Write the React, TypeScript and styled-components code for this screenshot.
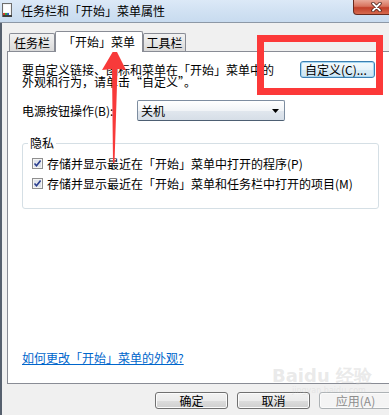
import React from "react";
import styled, { createGlobalStyle } from "styled-components";

const GlobalStyle = createGlobalStyle`
  html, body {
    margin: 0;
    padding: 0;
    background: #f0f0f0;
  }
  body {
    font-family: "Noto Sans CJK SC", "DejaVu Sans", sans-serif;
    font-size: 12px;
    color: #000;
  }
`;

const Window = styled.div`
  position: relative;
  width: 389px;
  height: 415px;
  overflow: hidden;
  background: #f0f0f0;
`;

const TitleBar = styled.div`
  height: 22px;
  display: flex;
  align-items: flex-start;
  background: linear-gradient(180deg, #dce9f7 0%, #cfe0f2 60%, #c8dbef 100%);
  border-bottom: 1px solid #8d98a6;
`;

const TitleIcon = styled.svg`
  margin: 3px 0 0 2px;
  flex: none;
`;

const TitleText = styled.div`
  margin: 3px 0 0 8px;
  line-height: 16px;
  font-size: 12px;
  color: #000;
  white-space: nowrap;
`;

const CloseButton = styled.div`
  margin-left: auto;
  margin-right: -11px;
  width: 47px;
  height: 15px;
  box-sizing: border-box;
  border: 1px solid #6a2a1e;
  border-top: none;
  border-radius: 0 0 4px 4px;
  background: linear-gradient(180deg, #e9a999 0%, #d8735e 45%, #c2402a 55%, #d66a4f 100%);
  display: flex;
  align-items: center;
  justify-content: center;
`;

const Body = styled.div`
  border-left: 2px solid #56606e;
  padding: 8px 0 0 5px;
  height: 392px;
  box-sizing: border-box;
`;

const TabRow = styled.div`
  display: flex;
  align-items: flex-end;
  padding-left: 2px;
  height: 20px;
`;

const Tab = styled.div<{ $active?: boolean; $w: number }>`
  position: relative;
  z-index: ${(p) => (p.$active ? 2 : 1)};
  width: ${(p) => p.$w}px;
  height: ${(p) => (p.$active ? 21 : 18)}px;
  margin-bottom: ${(p) => (p.$active ? -1 : 0)}px;
  box-sizing: border-box;
  border: 1px solid #898c95;
  border-bottom: none;
  border-radius: 2px 2px 0 0;
  background: ${(p) =>
    p.$active ? "#ffffff" : "linear-gradient(180deg, #f2f2f2 0%, #e6e6e6 50%, #d9d9d9 100%)"};
  display: flex;
  align-items: center;
  justify-content: center;
  font-size: 12px;
  line-height: 16px;
  white-space: nowrap;
`;

const Panel = styled.div`
  width: 385px;
  height: 333px;
  box-sizing: border-box;
  border: 1px solid #898c95;
  background: #fff;
  padding: 12px 16px 19px 14px;
  display: flex;
  flex-direction: column;
`;

const IntroRow = styled.div`
  display: flex;
  justify-content: space-between;
  align-items: flex-start;
`;

const IntroText = styled.div`
  width: 256px;
  line-height: 12px;
  font-size: 12px;
`;

const Button = styled.div<{ $w: number; $focus?: boolean; $disabled?: boolean }>`
  width: ${(p) => p.$w}px;
  height: 17px;
  box-sizing: border-box;
  border: 1px solid ${(p) => (p.$focus ? "#3c7fb1" : p.$disabled ? "#adb2b5" : "#707070")};
  border-radius: 3px;
  background: ${(p) =>
    p.$disabled
      ? "#f4f4f4"
      : p.$focus
      ? "linear-gradient(180deg, #f4fafd 0%, #e7f3fa 50%, #d6ebf6 51%, #cfe6f3 100%)"
      : "linear-gradient(180deg, #f2f2f2 0%, #ebebeb 50%, #dddddd 51%, #cfcfcf 100%)"};
  box-shadow: ${(p) => (p.$focus ? "inset 0 0 0 1px #a6d7f2" : "inset 0 0 0 1px #fbfbfb")};
  color: ${(p) => (p.$disabled ? "#8d8d8d" : "#000")};
  display: flex;
  align-items: center;
  justify-content: center;
  font-size: 12px;
  line-height: 14px;
  white-space: nowrap;
`;

const CustomizeButton = styled(Button)`
  margin-top: -3px;
  justify-content: flex-start;
  padding-left: 4px;
`;

const PowerRow = styled.div`
  display: flex;
  align-items: center;
  margin-top: 12px;
  height: 21px;
`;

const PowerLabel = styled.div`
  width: 115px;
  font-size: 12px;
`;

const Select = styled.div`
  width: 148px;
  height: 21px;
  box-sizing: border-box;
  border: 1px solid #7d8da0;
  border-bottom-color: #4d5f73;
  border-radius: 2px;
  background: linear-gradient(180deg, #ffffff 0%, #f1f4f7 50%, #e1e7ee 51%, #d6dee7 100%);
  display: flex;
  align-items: center;
  padding: 0 5px 0 3px;
  font-size: 12px;
`;

const SelectArrow = styled.svg`
  margin-left: auto;
`;

const Group = styled.fieldset`
  margin: 15px 0 0 0;
  width: 357px;
  box-sizing: border-box;
  border: 1px solid #d5dfe5;
  border-radius: 3px;
  padding: 3px 10px 15px 9px;
`;

const GroupLegend = styled.legend`
  margin-left: -4px;
  padding: 0 2px;
  font-size: 12px;
  line-height: 14px;
`;

const CheckRow = styled.label`
  display: flex;
  align-items: center;
  gap: 4px;
  height: 20px;
  font-size: 12px;
  white-space: nowrap;
`;

const Link = styled.a`
  margin-top: auto;
  color: #0066cc;
  text-decoration: underline;
  font-size: 12px;
  line-height: 12px;
  align-self: flex-start;
  cursor: pointer;
`;

const ButtonRow = styled.div`
  width: 385px;
  display: flex;
  justify-content: flex-end;
  gap: 9px;
  margin-top: 8px;
`;

const Annotation = styled.div`
  position: absolute;
  left: 257px;
  top: 35px;
  width: 126px;
  height: 60px;
  box-sizing: border-box;
  border: 7px solid #fc3939;
  pointer-events: none;
`;

const ArrowMark = styled.svg`
  position: absolute;
  left: 100px;
  top: 47px;
  pointer-events: none;
`;

const Watermark = styled.div`
  position: absolute;
  left: 272px;
  top: 366px;
  color: rgba(200, 200, 200, 0.4);
  font-family: "DejaVu Sans", sans-serif;
  font-weight: bold;
  font-size: 18px;
  line-height: 20px;
  pointer-events: none;
  white-space: nowrap;
`;

const WatermarkSub = styled.div`
  font-size: 8px;
  line-height: 9px;
  font-weight: normal;
  padding-left: 20px;
  color: rgba(200, 200, 200, 0.3);
`;

const CheckBox = () => (
  <svg width="11" height="11" viewBox="0 0 11 11">
    <rect x="0.5" y="0.5" width="10" height="10" fill="#f4f4f4" stroke="#8f8f8f" />
    <rect x="2" y="2" width="7" height="7" fill="#dfe3ea" />
    <path d="M2.5 5.5 L4.5 7.8 L8.6 2.6" fill="none" stroke="#2c3f8f" strokeWidth="1.6" />
  </svg>
);

export default function App() {
  return (
    <Window>
      <GlobalStyle />
      <TitleBar>
        <TitleIcon width="11" height="15" viewBox="0 0 11 15">
          <rect x="0.5" y="0.5" width="9" height="13" fill="#f4f4f4" stroke="#6d6d6d" />
          <rect x="2" y="2" width="6" height="7" fill="#ffffff" />
          <rect x="1" y="10" width="2" height="2" fill="#d23a2a" />
          <rect x="3" y="10" width="2" height="2" fill="#3aa33a" />
          <rect x="5" y="10" width="2" height="2" fill="#2f62c7" />
          <rect x="1" y="12" width="9" height="2" fill="#3d3d3d" />
        </TitleIcon>
        <TitleText>任务栏和「开始」菜单属性</TitleText>
        <CloseButton>
          <svg width="11" height="10" viewBox="0 0 11 10">
            <path d="M2 1.5 L9 8.5 M9 1.5 L2 8.5" stroke="#4a2018" strokeWidth="3.4" strokeLinecap="round" />
            <path d="M2 1.5 L9 8.5 M9 1.5 L2 8.5" stroke="#ffffff" strokeWidth="1.8" strokeLinecap="round" />
          </svg>
        </CloseButton>
      </TitleBar>
      <Body>
        <TabRow>
          <Tab $w={46}>任务栏</Tab>
          <Tab $w={88} $active>
            「开始」菜单
          </Tab>
          <Tab $w={43}>工具栏</Tab>
        </TabRow>
        <Panel>
          <IntroRow>
            <IntroText>
              要自定义链接、图标和菜单在「开始」菜单中的外观和行为，请单击“自定义”。
            </IntroText>
            <CustomizeButton $w={75} $focus>
              自定义(C)...
            </CustomizeButton>
          </IntroRow>
          <PowerRow>
            <PowerLabel>电源按钮操作(B):</PowerLabel>
            <Select>
              关机
              <SelectArrow width="7" height="4" viewBox="0 0 7 4">
                <path d="M0 0 H7 L3.5 4 Z" fill="#000" />
              </SelectArrow>
            </Select>
          </PowerRow>
          <Group>
            <GroupLegend>隐私</GroupLegend>
            <CheckRow>
              <CheckBox />
              存储并显示最近在「开始」菜单中打开的程序(P)
            </CheckRow>
            <CheckRow>
              <CheckBox />
              存储并显示最近在「开始」菜单和任务栏中打开的项目(M)
            </CheckRow>
          </Group>
          <Link>如何更改「开始」菜单的外观?</Link>
        </Panel>
        <ButtonRow>
          <Button $w={73}>确定</Button>
          <Button $w={73}>取消</Button>
          <Button $w={73} $disabled>
            应用(A)
          </Button>
        </ButtonRow>
      </Body>
      <Annotation />
      <ArrowMark width="28" height="118" viewBox="0 0 28 118">
        <path d="M15 1 L2 23 L12 22 L13 116 L14.5 116 L17.5 22 L26 23 Z" fill="#f83a3a" />
      </ArrowMark>
      <Watermark>
        Baidu 经验
        <WatermarkSub>jingyan.baidu.com</WatermarkSub>
      </Watermark>
    </Window>
  );
}
